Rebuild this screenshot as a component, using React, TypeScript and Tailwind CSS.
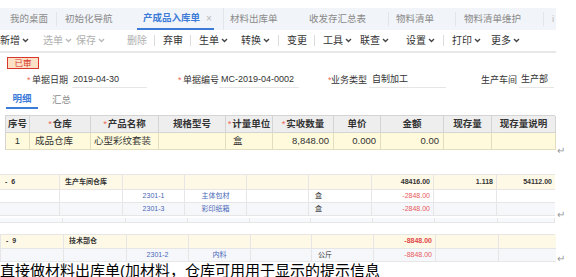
import React from "react";

const font = "font-['Liberation_Sans','Noto_Sans_CJK_SC',sans-serif]";

function Caret({ muted = false }: { muted?: boolean }) {
  return (
    <svg
      width="7"
      height="5"
      viewBox="0 0 7 5"
      className="ml-[2px] inline-block"
      fill="none"
      stroke={muted ? "#b8b8b8" : "#444"}
      strokeWidth="1.4"
    >
      <path d="M1 1l2.5 2.5L6 1" />
    </svg>
  );
}

function Sep() {
  return <span className="h-[11px] w-[9px] shrink-0 border-l border-[#dcdcdc]" />;
}

function Tool({
  label,
  w,
  caret = false,
  muted = false,
}: {
  label: string;
  w: string;
  caret?: boolean;
  muted?: boolean;
}) {
  return (
    <span className={`flex shrink-0 items-center ${w} ${muted ? "text-[#b0b0b0]" : "text-[#333]"}`}>
      {label}
      {caret && <Caret muted={muted} />}
    </span>
  );
}

function Star() {
  return <span className="w-[5px] shrink-0 text-[9px] text-[#f06a5a]">*</span>;
}

export default function App() {
  return (
    <div className={`h-[277px] w-[576px] overflow-hidden bg-white ${font}`}>
      <div className="h-[8px]" />

      {/* top tabs */}
      <div className="flex h-[22px] w-[556px] items-center bg-[#f1f4f8] text-[9.5px] text-[#8a8a8a]">
        <div className="flex w-[57px] shrink-0 items-center border-r border-[#e2e5ea] pl-[10px]">我的桌面</div>
        <div className="flex w-[65px] shrink-0 items-center pl-[8px]">初始化导航</div>
        <div className="flex h-full w-[102px] shrink-0 items-center border-r border-[#e2e5ea] pl-[15px]">
          <div className="flex h-full items-center border-b-2 border-[#3d7bd8] pl-[6px] pr-[2px]">
            <span className="font-bold text-[#3d7bd8]">产成品入库单</span>
            <span className="ml-[6px] text-[10px] text-[#b8b8b8]">×</span>
          </div>
        </div>
        <div className="flex w-[71px] shrink-0 items-center pl-[6px]">材料出库单</div>
        <div className="flex w-[94px] shrink-0 items-center border-r border-[#e2e5ea] pl-[14px]">收发存汇总表</div>
        <div className="flex w-[67px] shrink-0 items-center border-r border-[#e2e5ea] pl-[7px]">物料清单</div>
        <div className="flex w-[88px] shrink-0 items-center border-r border-[#e2e5ea] pl-[8px]">物料清单维护</div>
        <div className="flex items-center pl-[8px] text-[#bbb]">i</div>
      </div>

      {/* toolbar */}
      <div className="flex h-[23px] w-[556px] items-center border-b-2 border-[#e8e8e8] text-[10px]">
        <Tool label="新增" w="w-[43px]" caret />
        <Tool label="选单" w="w-[33px]" caret muted />
        <Tool label="保存" w="w-[51px]" caret muted />
        <Tool label="删除" w="w-[27px]" muted />
        <Sep />
        <Tool label="弃审" w="w-[27px]" />
        <Sep />
        <Tool label="生单" w="w-[42px]" caret />
        <Tool label="转换" w="w-[37px]" caret />
        <Sep />
        <Tool label="变更" w="w-[27px]" />
        <Sep />
        <Tool label="工具" w="w-[37px]" caret />
        <Tool label="联查" w="w-[46px]" caret />
        <Tool label="设置" w="w-[37px]" caret />
        <Sep />
        <Tool label="打印" w="w-[39px]" caret />
        <Tool label="更多" w="w-[40px]" caret />
      </div>

      {/* stamp */}
      <div className="mt-[4px] ml-[7px] flex h-[12px] w-[32px] items-center justify-center border-[1.5px] border-[#d8382c] bg-[#fde1c6] text-[8.5px] leading-none text-[#d8382c]">
        已审
      </div>

      {/* form row */}
      <div className="mt-[4px] flex h-[15px] items-center text-[9px] text-[#333]">
        <span className="w-[27px] shrink-0" />
        <Star />
        <span className="w-[40px] shrink-0">单据日期</span>
        <span className="flex h-full w-[75px] shrink-0 items-center border-b border-[#e6e6e6] pl-[1px]">2019-04-30</span>
        <span className="w-[31px] shrink-0" />
        <Star />
        <span className="w-[36px] shrink-0">单据编号</span>
        <span className="flex h-full w-[80px] shrink-0 items-center border-b border-[#e6e6e6] pl-[2px]">MC-2019-04-0002</span>
        <span className="w-[29px] shrink-0" />
        <span className="w-[3px] shrink-0 text-[9px] text-[#f06a5a]">*</span>
        <span className="w-[38px] shrink-0">业务类型</span>
        <span className="flex h-full w-[77px] shrink-0 items-center border-b border-[#e6e6e6] pl-[3px]">自制加工</span>
        <span className="w-[35px] shrink-0" />
        <span className="w-[38px] shrink-0">生产车间</span>
        <span className="flex h-full w-[35px] shrink-0 items-center border-b border-[#e6e6e6] pl-[2px]">生产部</span>
      </div>

      {/* detail tabs */}
      <div className="mt-[4px] flex h-[17px] items-center text-[9.5px]">
        <span className="ml-[6px] flex h-full w-[32px] items-center justify-center border-b-2 border-[#3d7bd8] font-bold text-[#3d7bd8]">
          明细
        </span>
        <span className="ml-[14px] text-[#8a8a8a]">汇总</span>
      </div>

      {/* detail table */}
      <div className="mt-[6px] flex items-end">
        <div className="ml-[5px] grid w-[550px] grid-cols-[24px_61px_68px_67px_47px_61px_47px_63px_48px_64px] border-l border-t border-[#d4d4d4] text-[9.5px]">
          {[
            ["序号", false],
            ["仓库", true],
            ["产品名称", true],
            ["规格型号", false],
            ["计量单位", true],
            ["实收数量", true],
            ["单价", false],
            ["金额", false],
            ["现存量", false],
            ["现存量说明", false],
          ].map(([t, req]) => (
            <div
              key={t as string}
              className="flex h-[17px] items-center justify-center border-b border-r border-[#d4d4d4] bg-[#eeeeee] font-bold text-[#333]"
            >
              {req && <span className="mr-[1px] font-normal text-[#f06a5a]">*</span>}
              {t}
            </div>
          ))}
          <div className="flex h-[17px] items-center justify-center border-b border-r border-[#e2dcc0] bg-[#fffadb] text-[#333]">1</div>
          <div className="flex h-[17px] items-center border-b border-r border-[#e2dcc0] bg-[#fffadb] pl-[5px] text-[#333]">成品仓库</div>
          <div className="flex h-[17px] items-center border-b border-r border-[#e2dcc0] bg-[#fffadb] pl-[3px] text-[#333]">心型彩纹套装</div>
          <div className="h-[17px] border-b border-r border-[#e2dcc0] bg-[#fffadb]" />
          <div className="flex h-[17px] items-center border-b border-r border-[#e2dcc0] bg-[#fffadb] pl-[7px] text-[#333]">盒</div>
          <div className="flex h-[17px] items-center justify-end border-b border-r border-[#e2dcc0] bg-[#fffadb] pr-[4px] text-[#333]">8,848.00</div>
          <div className="flex h-[17px] items-center justify-end border-b border-r border-[#e2dcc0] bg-[#fffadb] pr-[4px] text-[#333]">0.000</div>
          <div className="flex h-[17px] items-center justify-end border-b border-r border-[#e2dcc0] bg-[#fffadb] pr-[4px] text-[#333]">0.00</div>
          <div className="h-[17px] border-b border-r border-[#e2dcc0] bg-[#fffadb]" />
          <div className="h-[17px] border-b border-r border-[#e2dcc0] bg-[#fffadb]" />
        </div>
        <span className="mb-[-8px] ml-[2px] text-[10px] text-[#999]">↵</span>
      </div>

      {/* summary block 1 */}
      <div className="mt-[24px] flex items-end">
        <div className="grid w-[555px] grid-cols-[60px_63px_62px_62px_62px_63px_62px_63px_58px] border-t border-[#e6e6e6] text-[7px]">
          <div className="flex h-[15px] items-center border-b border-r border-[#e6e6e6] bg-[#fdf9e6] pl-[5px] font-bold text-[#333]">-&nbsp;&nbsp;6</div>
          <div className="flex h-[15px] items-center border-b border-r border-[#e6e6e6] bg-[#fdf9e6] pl-[5px] font-bold text-[#333]">生产车间仓库</div>
          <div className="h-[15px] border-b border-r border-[#e6e6e6] bg-[#fdf9e6]" />
          <div className="h-[15px] border-b border-r border-[#e6e6e6] bg-[#fdf9e6]" />
          <div className="h-[15px] border-b border-r border-[#e6e6e6] bg-[#fdf9e6]" />
          <div className="h-[15px] border-b border-r border-[#e6e6e6] bg-[#fdf9e6]" />
          <div className="flex h-[15px] items-center justify-end border-b border-r border-[#e6e6e6] bg-[#fdf9e6] pr-[3px] font-bold text-[#333]">48416.00</div>
          <div className="flex h-[15px] items-center justify-end border-b border-r border-[#e6e6e6] bg-[#fdf9e6] pr-[3px] font-bold text-[#333]">1.118</div>
          <div className="flex h-[15px] items-center justify-end border-b border-[#e6e6e6] bg-[#fdf9e6] pr-[3px] font-bold text-[#333]">54112.00</div>

          {[
            ["2301-1", "主体包材", "bg-white"],
            ["2301-3", "彩印纸箱", "bg-[#f5f7fa]"],
          ].map(([code, name, bg]) => (
            <React.Fragment key={code}>
              <div className={`h-[13px] border-b border-r border-[#e6e6e6] ${bg}`} />
              <div className={`h-[13px] border-b border-r border-[#e6e6e6] ${bg}`} />
              <div className={`flex h-[13px] items-center justify-center border-b border-r border-[#e6e6e6] text-[#4a68b8] ${bg}`}>{code}</div>
              <div className={`flex h-[13px] items-center justify-center border-b border-r border-[#e6e6e6] text-[#4a68b8] ${bg}`}>{name}</div>
              <div className={`h-[13px] border-b border-r border-[#e6e6e6] ${bg}`} />
              <div className={`flex h-[13px] items-center border-b border-r border-[#e6e6e6] pl-[6px] text-[#333] ${bg}`}>盒</div>
              <div className={`flex h-[13px] items-center justify-end border-b border-r border-[#e6e6e6] pr-[3px] text-[#e85a5a] ${bg}`}>-2848.00</div>
              <div className={`h-[13px] border-b border-r border-[#e6e6e6] ${bg}`} />
              <div className={`h-[13px] border-b border-[#e6e6e6] ${bg}`} />
            </React.Fragment>
          ))}
        </div>
        <span className="mb-[-6px] ml-[2px] text-[10px] text-[#999]">↵</span>
      </div>

      {/* partial strip */}
      <div className="mt-[2px] grid h-[5px] w-[555px] grid-cols-[63px_63px_62px_62px_61px_62px_62px_63px_57px] border-b border-[#e6e6e6]">
        {Array.from({ length: 9 }).map((_, i) => (
          <div key={i} className="border-r border-[#e6e6e6] bg-[#f6f8fb]" />
        ))}
      </div>

      {/* summary block 2 */}
      <div className="mt-[11px] flex items-end">
        <div className="grid w-[555px] grid-cols-[63px_63px_62px_62px_61px_62px_62px_63px_57px] border-t border-l border-[#e6e6e6] text-[7px]">
          <div className="flex h-[14px] items-center border-b border-r border-[#e6e6e6] bg-[#fdf9e6] pl-[5px] font-bold text-[#333]">-&nbsp;&nbsp;9</div>
          <div className="flex h-[14px] items-center border-b border-r border-[#e6e6e6] bg-[#fdf9e6] pl-[5px] font-bold text-[#333]">技术部仓</div>
          <div className="h-[14px] border-b border-r border-[#e6e6e6] bg-[#fdf9e6]" />
          <div className="h-[14px] border-b border-r border-[#e6e6e6] bg-[#fdf9e6]" />
          <div className="h-[14px] border-b border-r border-[#e6e6e6] bg-[#fdf9e6]" />
          <div className="h-[14px] border-b border-r border-[#e6e6e6] bg-[#fdf9e6]" />
          <div className="flex h-[14px] items-center justify-end border-b border-r border-[#e6e6e6] bg-[#fdf9e6] pr-[3px] font-bold text-[#e04848]">-8848.00</div>
          <div className="h-[14px] border-b border-r border-[#e6e6e6] bg-[#fdf9e6]" />
          <div className="h-[14px] border-b border-[#e6e6e6] bg-[#fdf9e6]" />

          <div className="h-[13px] border-b border-r border-[#e6e6e6] bg-[#f5f7fa]" />
          <div className="h-[13px] border-b border-r border-[#e6e6e6] bg-[#f5f7fa]" />
          <div className="flex h-[13px] items-center justify-center border-b border-r border-[#e6e6e6] bg-[#f5f7fa] text-[#4a68b8]">2301-2</div>
          <div className="flex h-[13px] items-center justify-center border-b border-r border-[#e6e6e6] bg-[#f5f7fa] text-[#4a68b8]">内料</div>
          <div className="h-[13px] border-b border-r border-[#e6e6e6] bg-[#f5f7fa]" />
          <div className="flex h-[13px] items-center border-b border-r border-[#e6e6e6] bg-[#f5f7fa] pl-[6px] text-[#333]">公斤</div>
          <div className="flex h-[13px] items-center justify-end border-b border-r border-[#e6e6e6] bg-[#f5f7fa] pr-[3px] text-[#e85a5a]">-8848.00</div>
          <div className="h-[13px] border-b border-r border-[#e6e6e6] bg-[#f5f7fa]" />
          <div className="h-[13px] border-b border-[#e6e6e6] bg-[#f5f7fa]" />
        </div>
        <span className="mb-[-4px] ml-[2px] text-[10px] text-[#999]">↵</span>
      </div>

      {/* document text below */}
      <div className="mt-[1px] whitespace-nowrap text-[15px] leading-[15px] text-black">
        直接做材料出库单(加材料，仓库可用用于显示的提示信息
      </div>
    </div>
  );
}
